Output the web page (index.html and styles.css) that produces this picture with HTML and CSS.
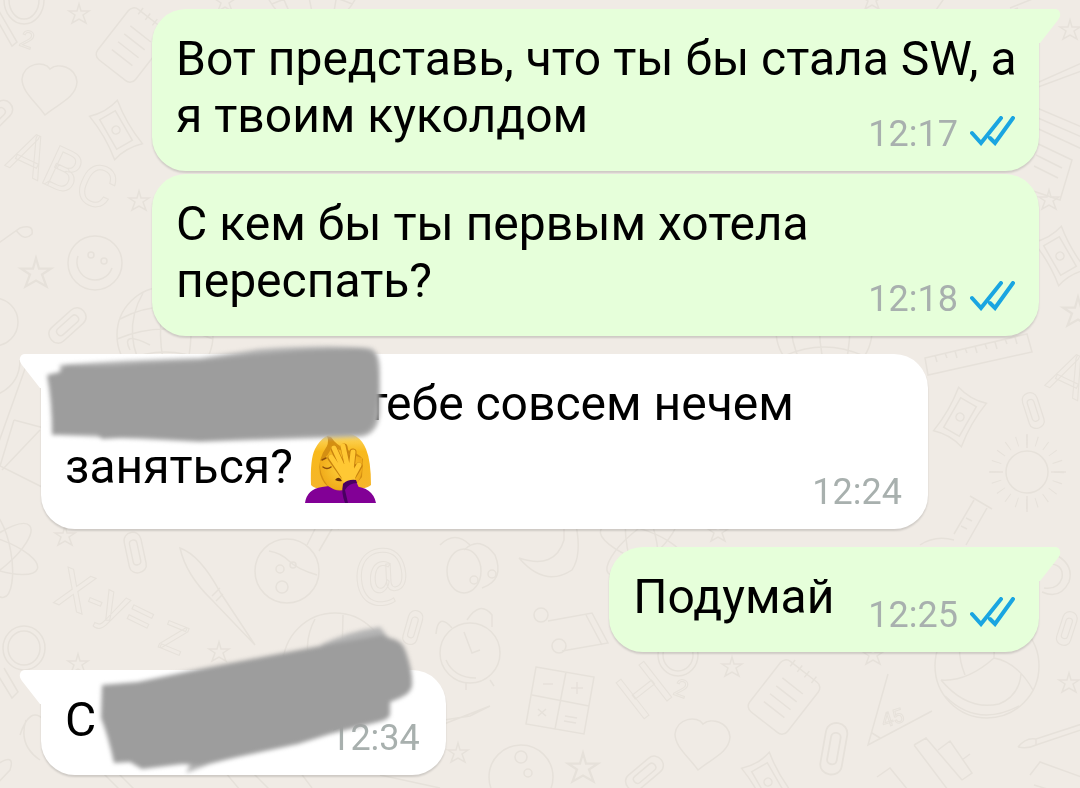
FILE: index.html
```html
<!DOCTYPE html>
<html lang="ru">
<head>
  <meta charset="UTF-8" />
  <title>Чат</title>
  <link rel="stylesheet" href="styles.css">
</head>
<body>
  <!-- doodle wallpaper -->
  <svg class="wallpaper" viewBox="0 0 1080 788" preserveAspectRatio="xMidYMid slice" aria-hidden="true">
    <defs>
      <path id="star" d="M0-10L2-3L10-3L4 1L7 9L0 5L-7 9L-4 1L-10-3L-2-3Z" />
      <path id="heart" d="M-5 27C-14 14-28 4-28-9C-26-25-6-28 0-19C8-26 26-21 27-6C26 10 8 16-5 27Z" />
      <path id="clip" d="M-9-12C-9-24 9-24 9-12V14C9 25-9 25-9 14ZM-4 10V-9C-4-14 4-14 4-9V10C4 15-4 15-4 10" />
      <g id="note">
        <rect x="-24" y="-32" width="48" height="64" rx="7" />
        <path d="M-13-14H13M-13-4H13M-13 6H13M-13 16H13M-14-36V-28M-5-36V-28M4-36V-28M13-36V-28" />
      </g>
      <g id="money">
        <path d="M-16-25Q0-20 16-25Q12 0 16 25Q0 20-16 25Q-12 0-16-25Z" />
        <rect x="-9" y="-17" width="18" height="34" />
        <circle r="4" />
      </g>
      <g id="ball">
        <circle r="52" />
        <path d="M-46 14Q-20 16 7-8Q30-4 46 24M7-8L8-50M-46 14Q-20 45 12 38Q32 30 34 8M-22 9Q-34-20-20-46M-42 30Q-10 62 32 40" />
      </g>
      <g id="globe">
        <circle r="48" />
        <path d="M-45-16Q0-40 45-16M-48 4Q0-16 48 4M-40 26Q0 8 40 26M-22-42Q-46 0-16 45M2-48Q-12 0 4 48M24-41Q30 0 20 43" />
      </g>
      <g id="flask">
        <circle r="32" />
        <path d="M-18-20Q-6-18 2-10T30 4M20-26L32-50M32-20L46-44M26-54L52-42" />
        <circle cx="-7" cy="-2" r="4" /><circle cx="6" cy="-6" r="3" /><circle cx="-5" cy="16" r="6" />
      </g>
      <g id="brush">
        <path d="M-30 8Q-22-2-12 0L40-17M-12 6L42-12M-30 8Q-20 10-12 6V0" />
      </g>
      <g id="atom">
        <ellipse rx="44" ry="15" transform="rotate(20)" />
        <ellipse rx="44" ry="15" transform="rotate(80)" />
        <ellipse rx="44" ry="15" transform="rotate(140)" />
      </g>
    </defs>

    <path d="M-4 18L12 46L17 42L-4 6" />
    <ellipse cx="24" cy="0" rx="20" ry="24" /><ellipse cx="24" cy="0" rx="15" ry="19" />
    <text x="18" y="45" font-size="24" transform="rotate(20 18 45)">2</text>
    <use href="#star" x="79" y="14" />
    <use href="#note" transform="translate(132 45) rotate(38)" />
    <use href="#heart" x="50" y="88" />
    <use href="#clip" transform="translate(-5 118) rotate(45)" />
    <use href="#money" transform="translate(116 130) rotate(-30)" />
    <text x="4" y="165" font-size="58" transform="rotate(25 4 165)">ABC</text>
    <use href="#star" x="139" y="201" />
    <path d="M-4 245L20 228Q34 224 32 234Q24 242 16 230" />
    <circle cx="95" cy="263" r="27" />
    <path d="M78 256A18 18 0 1 0 112 268" />
    <circle cx="91" cy="255" r="3" /><circle cx="104" cy="261" r="3" />
    <use href="#star" transform="translate(36 273) scale(1.5)" />
    <circle cx="-6" cy="322" r="24" />
    <use href="#clip" transform="translate(68 325) rotate(48)" />
    <use href="#globe" x="165" y="335" />
    <use href="#star" x="225" y="2" />
    <use href="#globe" x="312" y="-22" />
    <use href="#star" x="872" y="0" />
    <path d="M936 10L950-10M1010 8L1040-4M1004 14L1018 8" />

    <use href="#star" x="1070" y="30" />
    <path d="M1030 90L1084 70M1030 86L1084 62" />
    <path d="M1030 105L1084 128M1030 125L1084 150M1038 118L1084 138M1030 140L1072 160L1060 200L1030 190M1036 155L1062 168M1034 166L1058 178" />
    <use href="#star" x="1049" y="200" />
    <use href="#money" transform="translate(1060 256) rotate(-30)" />
    <use href="#star" transform="translate(1078 312) scale(1.5)" />
    <use href="#globe" x="824" y="330" />
    <path d="M925 358L1027 334L1032 352L928 375ZM935 355L937 362M945 353L947 358M955 351L957 358M965 348L967 353M975 346L977 353M985 344L987 349M995 342L997 349M1005 339L1007 344M1015 337L1017 344" />
    <use href="#money" transform="translate(960 417) rotate(30)" />
    <use href="#clip" transform="translate(1033 410) rotate(-18) scale(.85)" />
    <text x="1044" y="385" font-size="58" transform="rotate(25 1044 385)">A</text>
    <circle cx="1027" cy="472" r="21" />
    <circle class="rays" cx="1027" cy="472" r="32" />
    <path d="M1027 434V448M1027 496V512M989 472H1003M1051 472H1066" />
    <path d="M970 496L992 509M974 500L954 534M987 508L966 545M966 518L972 521M961 526L967 529M920 545Q935 535 954 540" />

    <path d="M-4 450L26 366M2 470L40 430M14 420L44 428M14 420L0 466L44 488M-4 395Q20 385 20 360" />
    <path d="M130 350Q120 330 150 345M440 545Q455 530 470 545" />
    <use href="#atom" x="-4" y="554" />
    <use href="#star" x="65" y="536" />
    <use href="#clip" transform="translate(135 552) rotate(-12) scale(.95)" />
    <g font-size="54">
      <text x="52" y="602" transform="rotate(22 52 602)">X-</text>
      <text x="96" y="615" transform="rotate(26 96 615)">y=</text>
      <text x="156" y="646" transform="rotate(22 156 646)">z</text>
    </g>
    <path d="M180 548Q200 555 220 592L255 645L212 600Q186 575 180 548ZM212 596L220 588M216 601L223 594" />
    <use href="#star" x="219" y="652" />
    <use href="#flask" x="287" y="571" />
    <text x="353" y="592" font-size="62" transform="rotate(-8 380 575)">@</text>
    <use href="#ball" x="335" y="665" />
    <use href="#clip" transform="translate(413 627) rotate(16) scale(.8)" />
    <ellipse cx="24" cy="648" rx="21" ry="22" /><ellipse cx="24" cy="648" rx="16" ry="17" />
    <path d="M-4 672L12 698L18 692L4 668" />
    <use href="#star" x="78" y="664" />
    <path d="M20 735Q30 705 44 720M26 720Q18 745 40 760M-4 765Q16 752 10 770L-4 785" />
    <ellipse cx="464" cy="571" rx="17" ry="22" /><path d="M464 550Q480 535 495 555Q505 580 482 588" />
    <circle cx="474" cy="580" r="4" /><circle cx="492" cy="574" r="4" />
    <path d="M519 558Q555 570 564 540V525M519 558Q545 588 572 570Q582 555 576 525" />
    <circle cx="470" cy="653" r="30" />
    <path d="M446 660Q454 678 476 678M464 632L472 653L480 650M467 620Q480 600 492 615V627M452 628Q438 612 436 634M466 683V690M490 680L494 686" />
    <circle cx="541" cy="615" r="7" /><circle cx="559" cy="646" r="7" />
    <path d="M548 621L592 613L608 643L562 651M586 615L602 645" />
    <path d="M536 667L594 677L584 734L526 724ZM566 672L555 729M532 695L589 706M543 684H553M571 688H583M577 682V694M538 709L546 716M546 709L538 716M565 716L577 718M564 721L576 723" />
    <use href="#atom" x="642" y="545" />
    <text x="640" y="722" font-size="64" transform="rotate(-38 640 722)">H</text>
    <ellipse cx="678" cy="655" rx="20" ry="21" /><ellipse cx="678" cy="655" rx="15" ry="16" />
    <text x="672" y="694" font-size="24" transform="rotate(20 672 694)">2</text>
    <use href="#star" x="732" y="667" />
    <use href="#heart" x="703" y="743" />
    <path d="M444 724L490 706L470 716L444 720" />
    <use href="#star" x="458" y="753" />
    <circle cx="521" cy="777" r="32" /><circle cx="521" cy="757" r="6" /><circle cx="528" cy="773" r="4" />
    <use href="#star" transform="translate(583 768) scale(1.5)" />
    <use href="#clip" transform="translate(645 773) rotate(50)" />
    <use href="#star" x="718" y="532" />
    <use href="#star" x="873" y="655" />
    <use href="#note" transform="translate(784 697) rotate(38)" />
    <path d="M888 674L868 745L932 711M872 733L880 738" />
    <text x="884" y="728" font-size="20" transform="rotate(-18 884 728)">45</text>
    <use href="#clip" transform="translate(834 748) rotate(10) scale(1.2)" />
    <use href="#ball" x="987" y="666" />
    <use href="#clip" transform="translate(1067 628) rotate(18) scale(.8)" />
    <use href="#star" x="1069" y="683" />
    <use href="#brush" x="1048" y="739" />
    <path d="M1058 556Q1074 566 1069 582Q1060 600 1042 592M1044 588Q1058 590 1062 578Q1064 566 1052 564" />
    <path d="M914 745L926 738L962 780M914 745L948 790M938 750L950 741L972 773L962 780M962 760L970 754M877 777L890 768L908 790M1030 775L1040 762L1084 778M1034 785L1084 800" />
    <use href="#money" transform="translate(768 782) rotate(-30)" />
    <path d="M100 770L130 800M110 765L145 800M225 772L240 790M250 770L270 790M300 772L312 788M380 775L440 788" />
  </svg>

  <!-- shapes shared by the messages -->
  <svg class="sprite" aria-hidden="true">
    <symbol id="tail" viewBox="0 0 22 35">
      <path d="M0 0H16Q20 0 21 4Q22 7 19 11L1 34H0Z" />
    </symbol>
    <symbol id="ticks" viewBox="0 0 45 30">
      <path d="M2 17L11 27L31 2M20 22L25 27L43 2" />
    </symbol>
  </svg>

  <main class="chat">
    <div class="message out first">
      <svg class="tail" aria-hidden="true"><use href="#tail" /></svg>
      Вот представь, что ты бы стала SW, а я твоим куколдом
      <span class="meta"><time>12:17</time><svg class="ticks" role="img" aria-label="Прочитано"><use href="#ticks" /></svg></span>
    </div>

    <div class="message out">
      С кем бы ты первым хотела переспать?
      <span class="meta"><time>12:18</time><svg class="ticks" role="img" aria-label="Прочитано"><use href="#ticks" /></svg></span>
    </div>

    <div class="message in first with-emoji">
      <svg class="tail" aria-hidden="true"><use href="#tail" /></svg>
      <span class="hidden-name long"><svg viewBox="40 340 345 105" aria-hidden="true">
        <path class="soft" d="M60 364Q120 359 200 357L260 348Q330 343 370 347Q380 350 380 370V412Q378 434 360 436L200 441L60 434Z" />
        <path d="M47 374L60 371L66 364Q100 367 140 363L200 360L250 354Q310 348 360 348Q375 349 376 358Q381 385 376 412Q375 431 358 433Q280 435 200 440L140 436L102 438L97 433L52 434Q52 400 47 374Z" />
      </svg></span>
      тебе совсем нечем заняться?
      <svg class="emoji" viewBox="0 0 71 71" role="img" aria-label="Женщина закрывает лицо рукой">
        <defs>
          <linearGradient id="hair" x1="0" y1="0" x2="0" y2="1">
            <stop offset="0" stop-color="#ffdf70" /><stop offset=".35" stop-color="#f8b91c" /><stop offset="1" stop-color="#f5b52a" />
          </linearGradient>
          <radialGradient id="skin">
            <stop offset="0" stop-color="#ffcf38" /><stop offset="1" stop-color="#f0ab1a" />
          </radialGradient>
        </defs>
        <path fill="url(#hair)" d="M6 53Q5 27 10 17Q18 1 35 0Q54 0 61 17Q66 29 66 53Q61 58 49 55H20Q10 58 6 53Z" />
        <path fill="#d48f12" d="M22 4Q24 9 22 14Q12 28 15 42Q18 52 25 56H48L57 45L58 27Q52 20 42 18Q31 13 26 5Z" />
        <path fill="#dd9a16" d="M26 50H46V57Q36 64 26 57Z" />
        <path fill="#820096" d="M0 71Q2 57 17 55L24 54Q34 63 47 54Q68 55 71 71Z" />
        <path fill="url(#skin)" d="M15 29Q25 24 26 14Q38 20 57 26Q59 46 49 54Q36 62 23 54Q14 43 15 29Z" />
        <path fill="none" stroke="#8c4d0b" stroke-width="1.5" stroke-linecap="round" d="M18 35Q22 38 26 35M50 33Q53 36 56 33M17 28L21 26" />
        <path fill="#66300e" d="M30 48Q34 43 37 49Q34 50 30 48Z" />
        <path fill="none" stroke="#c9830f" stroke-width="7" stroke-linecap="round" d="M38 43L26 26M39 38L29 17M43 37L39 15M46 38L48 20M48 44L54 34" />
        <path fill="none" stroke="#ffc834" stroke-width="5" stroke-linecap="round" stroke-linejoin="round" d="M38 43L26 25M39 38L29 16M43 37L38 14M46 38L48 20M48 44L54 33" />
        <path fill="#ffc834" d="M34 34Q42 29 49 35Q52 43 49 51L40 52Q34 43 34 34Z" />
        <path fill="#820096" d="M38 52Q43 48 51 49L54 56Q56 62 60 71H42Q38 61 38 52Z" />
        <path fill="#490061" d="M38 52Q43 47 51 48L52 51Q44 51 40 58L43 71H40Q36 61 38 52Z" />
      </svg>
      <span class="meta"><time>12:24</time></span>
    </div>

    <div class="message out first">
      <svg class="tail" aria-hidden="true"><use href="#tail" /></svg>
      Подумай
      <span class="meta"><time>12:25</time><svg class="ticks" role="img" aria-label="Прочитано"><use href="#ticks" /></svg></span>
    </div>

    <div class="message in first">
      <svg class="tail" aria-hidden="true"><use href="#tail" /></svg>
      С <span class="hidden-name short"><svg viewBox="95 622 323 158" aria-hidden="true">
        <path class="soft" d="M320 645Q350 631 380 627L390 640V660ZM186 773L210 764L300 740V720L200 745Z" />
        <path d="M102 685L138 682L200 669L320 646L382 635L390 638Q402 640 406 652Q413 672 412 686Q411 693 400 698L390 702V715Q388 720 378 722L330 734L298 744L200 765L182 764L142 769L130 762L114 763Q108 735 101 718Z" />
      </svg></span>
      <span class="meta"><time>12:34</time></span>
    </div>
  </main>
</body>
</html>
```
FILE: styles.css
```css
body {
  margin: 0;
  min-height: 100vh;
  background: #f0ebe5;
  font-family: Roboto, "Liberation Sans", sans-serif;
  color: #000;
  overflow-x: hidden;
}

.wallpaper {
  position: fixed;
  top: 0;
  left: 0;
  z-index: -1;
  width: 100%;
  height: 100%;
  fill: none;
  stroke: #e6e1da;
  stroke-width: 1.5;
}
.wallpaper text {
  stroke-width: 1;
}
.wallpaper .rays {
  stroke-width: 10;
  stroke-dasharray: 1 9;
}

.sprite {
  position: absolute;
  width: 0;
  height: 0;
}

.chat {
  display: flex;
  flex-direction: column;
  padding: 9px 41px 14px;
}

.message {
  position: relative;
  max-width: calc(100% - 155px);
  margin-top: 3px;
  padding: 21px 20px 15px 24px;
  border-radius: 34px;
  box-shadow: 0 2px 2px rgba(0, 0, 0, 0.14);
  font-size: 48px;
  line-height: 57px;
}
.message.first {
  margin-top: 18px;
}
.message.first:first-child {
  margin-top: 0;
}

.out {
  align-self: flex-end;
  background: #e6ffda;
  fill: #e6ffda;
}
.in {
  align-self: flex-start;
  background: #fff;
  fill: #fff;
}
.out.first {
  border-top-right-radius: 0;
}
.in.first {
  border-top-left-radius: 0;
}

/* corner pointing to the sender */
.tail {
  position: absolute;
  top: 0;
  width: 22px;
  height: 35px;
}
.out .tail {
  left: 100%;
}
.in .tail {
  right: 100%;
  transform: scaleX(-1);
}

/* time and read mark, sits on the last line */
.meta {
  float: right;
  display: flex;
  align-items: center;
  gap: 12px;
  margin: 26px 4px 0 34px;
  font-size: 36px;
  line-height: 43px;
  color: #a8b0ae;
}
.in .meta {
  margin-right: 6px;
}
.with-emoji .meta {
  margin-top: 39px;
}
.ticks {
  width: 45px;
  height: 30px;
  margin-bottom: 7px;
  fill: none;
  stroke: #1aa5e1;
  stroke-width: 4;
  stroke-linecap: round;
}

.emoji {
  width: 71px;
  height: 71px;
  vertical-align: -20px;
}

/* painted-over names */
.hidden-name {
  position: relative;
  z-index: 1;
  display: inline-block;
  height: 34px;
}
.hidden-name svg {
  position: absolute;
  fill: #9d9d9d;
  filter: blur(2px);
}
.hidden-name .soft {
  fill: #b4b4b4;
}
.long {
  width: 288px;
}
.long svg {
  left: -25px;
  bottom: -26px;
  width: 345px;
  height: 105px;
}
.short {
  width: 188px;
}
.short svg {
  left: -13px;
  bottom: -44px;
  width: 323px;
  height: 158px;
}
```
